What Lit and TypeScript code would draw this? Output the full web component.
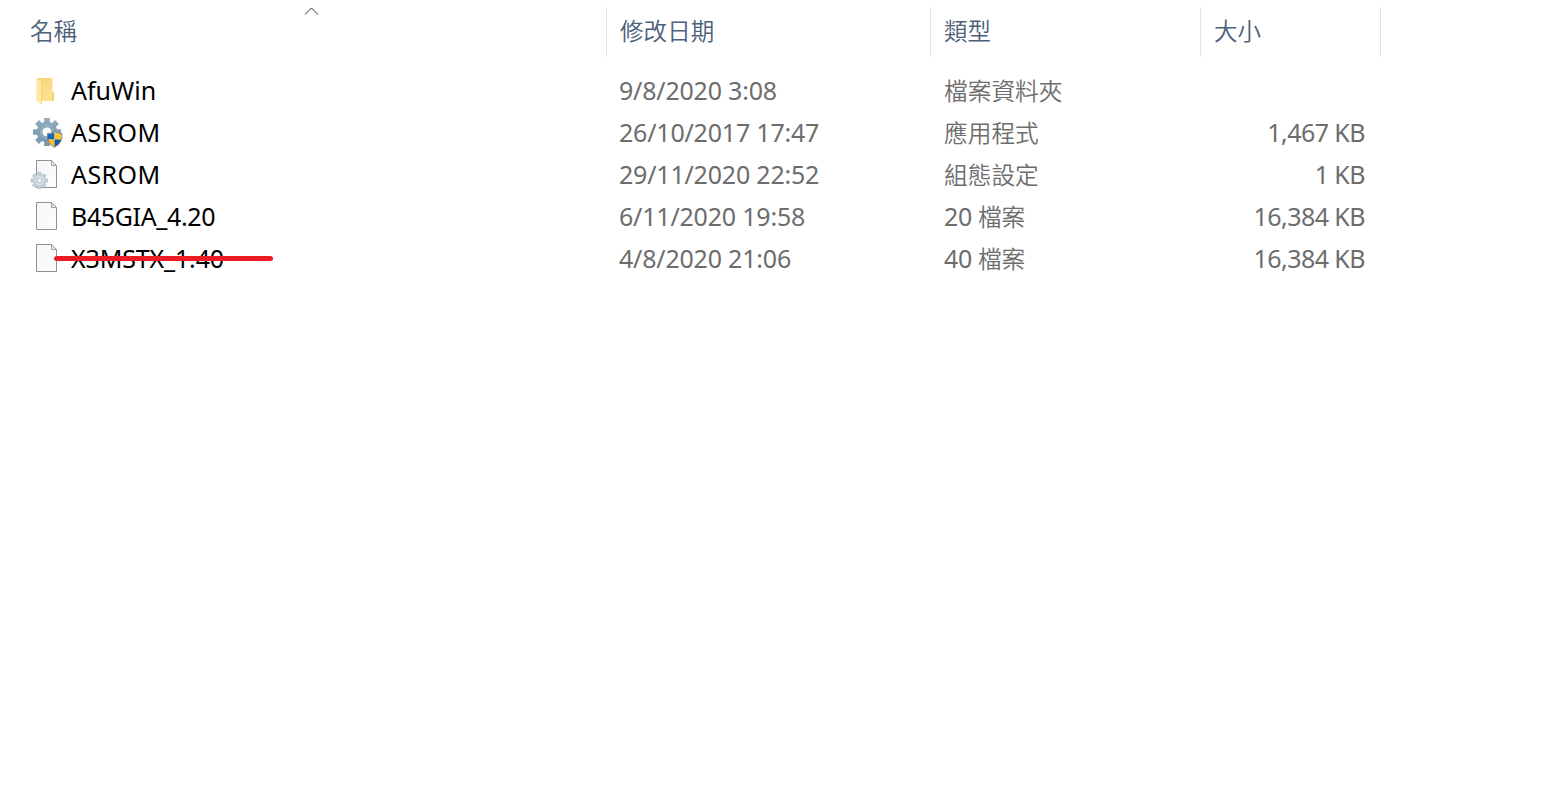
import { LitElement, html, css, svg, nothing } from 'lit'
import type { TemplateResult } from 'lit'
import { customElement, property } from 'lit/decorators.js'
import { styleMap } from 'lit/directives/style-map.js'

type FileKind = 'folder' | 'app' | 'config' | 'file'

interface FileEntry {
  readonly name: string
  readonly kind: FileKind
  readonly modified: string
  readonly type: string
  readonly size: string
  readonly tracking: number
  readonly crossed?: boolean
}

const FILES: ReadonlyArray<FileEntry> = [
  { name: 'AfuWin', kind: 'folder', modified: '9/8/2020 3:08', type: '檔案資料夾', size: '', tracking: 0 },
  { name: 'ASROM', kind: 'app', modified: '26/10/2017 17:47', type: '應用程式', size: '1,467 KB', tracking: 0.4 },
  { name: 'ASROM', kind: 'config', modified: '29/11/2020 22:52', type: '組態設定', size: '1 KB', tracking: 0.4 },
  { name: 'B45GIA_4.20', kind: 'file', modified: '6/11/2020 19:58', type: '20 檔案', size: '16,384 KB', tracking: -0.36 },
  { name: 'X3MSTX_1.40', kind: 'file', modified: '4/8/2020 21:06', type: '40 檔案', size: '16,384 KB', tracking: -0.15, crossed: true },
]

// Closed outline of a gear with eight teeth
const gearPath = (cx: number, cy: number, outer: number, inner: number): string => {
  const points: string[] = []
  for (let i = 0; i < 8; i++) {
    const mid = (i * Math.PI) / 4
    const steps: [number, number][] = [
      [-0.27, inner],
      [-0.2, outer],
      [0.2, outer],
      [0.27, inner],
    ]
    for (const [offset, r] of steps) {
      points.push(
        `${(cx + r * Math.cos(mid + offset)).toFixed(2)} ${(cy + r * Math.sin(mid + offset)).toFixed(2)}`
      )
    }
  }
  return `M${points.join('L')}Z`
}

const ring = (cx: number, cy: number, r: number): string =>
  `M${cx - r} ${cy}a${r} ${r} 0 1 0 ${2 * r} 0a${r} ${r} 0 1 0 ${-2 * r} 0Z`

const page = svg`
  <linearGradient id="paper" x1="0" y1="0" x2="1" y2="1">
    <stop offset="0" stop-color="#f4f7f8" />
    <stop offset="1" stop-color="#fcfcfd" />
  </linearGradient>
  <path d="M5.5 1.5h15l5 5v22h-20z" fill="url(#paper)" stroke="#919191" />
  <path d="M20.5 1.5v5h5z" fill="#e6e6e6" stroke="#919191" stroke-width=".8" />
`

const icons: Readonly<Record<FileKind, TemplateResult>> = {
  folder: svg`
    <linearGradient id="back" x1="0" y1="0" x2="1" y2="1">
      <stop offset="0" stop-color="#f6d477" />
      <stop offset="1" stop-color="#ffe293" />
    </linearGradient>
    <path d="M5.3 3H21.5V16.5L23 18V26H8z" fill="url(#back)" />
    <path d="M21.5 16.5L23 18V26H21.4z" fill="#efca67" />
    <path d="M5.3 3L10.8 7.2V29.8L5.3 26z" fill="#ffe8a2" />
    <path d="M10.5 7V29.8" stroke="#ecca70" stroke-width=".6" />
  `,
  app: svg`
    <linearGradient id="steel" x1="0" y1="0" x2="0" y2="1">
      <stop offset="0" stop-color="#8fabbd" />
      <stop offset="1" stop-color="#7896aa" />
    </linearGradient>
    <path d="${gearPath(16, 15, 14.3, 10.4)}${ring(16, 15, 4.6)}"
      fill="url(#steel)" fill-rule="evenodd" />
    <path d="${ring(16, 15, 6.3)}" fill="none" stroke="#9cb8c8" stroke-width="1" />
    <path d="M23.5 14.5Q27 16.6 31 16.5Q31.7 26.3 23.5 30.4Q15.7 26.3 16.3 16.5Q20.5 16.6 23.5 14.5Z"
      fill="#eef0ee" />
    <path d="M23.5 15V22.5H16.8Q16.4 19.5 16.7 16.9Q20.5 17 23.5 15Z" fill="#1c66b5" />
    <path d="M23.5 15Q26.8 17 30.6 16.9Q30.8 19.8 30.3 22.5H23.5Z" fill="#ffc52d" />
    <path d="M16.8 22.5H23.5V30Q18.3 27.5 16.8 22.5Z" fill="#f9bd2b" />
    <path d="M23.5 22.5H30.3Q28.8 27.5 23.5 30Z" fill="#1b5ca7" />
    <path d="M23.5 14.5Q27 16.6 31 16.5Q31.7 26.3 23.5 30.4Q15.7 26.3 16.3 16.5Q20.5 16.6 23.5 14.5Z"
      fill="none" stroke="#596a73" stroke-width=".7" />
  `,
  config: svg`
    ${page}
    <path d="${gearPath(8.3, 21.5, 8.4, 6.3)}${ring(8.3, 21.5, 2.2)}"
      fill="#c6d0d7" stroke="#a9b5bd" stroke-width=".5" fill-rule="evenodd" />
    <path d="${ring(8.3, 21.5, 3.9)}" fill="none" stroke="#dce3e7" stroke-width="1.2" />
  `,
  file: page,
}

@customElement('file-icon')
export class FileIcon extends LitElement {
  static override styles = css`
    :host {
      display: block;
      width: 32px;
      height: 32px;
      flex-shrink: 0;
    }

    svg {
      display: block;
      overflow: visible;
    }
  `

  @property()
  kind: FileKind = 'file'

  override render() {
    return html`
      <svg width="32" height="32" viewBox="0 0 32 32" aria-hidden="true">
        ${icons[this.kind]}
      </svg>
    `
  }
}

@customElement('app-root')
export class AppRoot extends LitElement {
  static override styles = css`
    :host {
      display: block;
      box-sizing: border-box;
      height: 802px;
      padding-top: 7px;
      overflow: hidden;
      background: #fff;
      color: #6d6d6d;
      font: 25px/42px 'Noto Sans', 'Noto Sans CJK TC', sans-serif;
      white-space: nowrap;
    }

    .head,
    .row {
      display: grid;
      grid-template-columns: 607px 324px 270px 180px;
    }

    .head {
      height: 50px;
      margin-bottom: 13px;
      color: #4c607a;
      line-height: 47px;
    }

    .cell {
      position: relative;
      box-sizing: border-box;
      padding-left: 13px;
      border-right: 1px solid #e5e5e5;
    }

    .cell:first-child {
      padding-left: 30px;
    }

    .cjk {
      font-family: 'Noto Sans CJK TC', sans-serif;
      font-size: 23.7px;
      font-weight: 350;
      letter-spacing: 0;
    }

    .head.cjk {
      font-size: 23.5px;
      letter-spacing: 0.1px;
    }

    .sort {
      position: absolute;
      top: 0;
      left: 304px;
    }

    .row {
      height: 42px;
      line-height: 41px;
    }

    .name {
      position: relative;
      display: flex;
      align-items: flex-start;
      gap: 8px;
      padding-left: 31px;
      color: #000;
    }

    file-icon {
      margin-top: 5px;
    }

    .date {
      padding-left: 12px;
      letter-spacing: -0.2px;
    }

    .type {
      padding-left: 13px;
      line-height: 40px;
      letter-spacing: -0.4px;
    }

    .size {
      padding-right: 16px;
      letter-spacing: -0.55px;
      text-align: right;
    }

    .strike {
      position: absolute;
      top: 18px;
      left: 54px;
      width: 219px;
      height: 5px;
      border-radius: 3px;
      background: #ed1c24;
    }
  `

  private renderType(type: string) {
    return type
      .split(/([\d ]+)/)
      .filter(Boolean)
      .map(part => (/\d/.test(part) ? part : html`<span class="cjk">${part}</span>`))
  }

  private renderRow(file: FileEntry) {
    return html`
      <div class="row">
        <div class="name">
          <file-icon kind=${file.kind}></file-icon>
          <span style=${styleMap({ letterSpacing: `${file.tracking}px` })}>${file.name}</span>
          ${file.crossed ? html`<i class="strike"></i>` : nothing}
        </div>
        <div class="date">${file.modified}</div>
        <div class="type">${this.renderType(file.type)}</div>
        <div class="size">${file.size}</div>
      </div>
    `
  }

  override render() {
    return html`
      <div class="head cjk">
        <div class="cell">
          名稱
          <svg class="sort" width="15" height="9" viewBox="0 0 15 9" aria-hidden="true">
            <path d="M1 7.5L7.5 1L14 7.5" fill="none" stroke="#333" stroke-width="1" />
          </svg>
        </div>
        <div class="cell">修改日期</div>
        <div class="cell">類型</div>
        <div class="cell">大小</div>
      </div>
      ${FILES.map(file => this.renderRow(file))}
    `
  }
}
